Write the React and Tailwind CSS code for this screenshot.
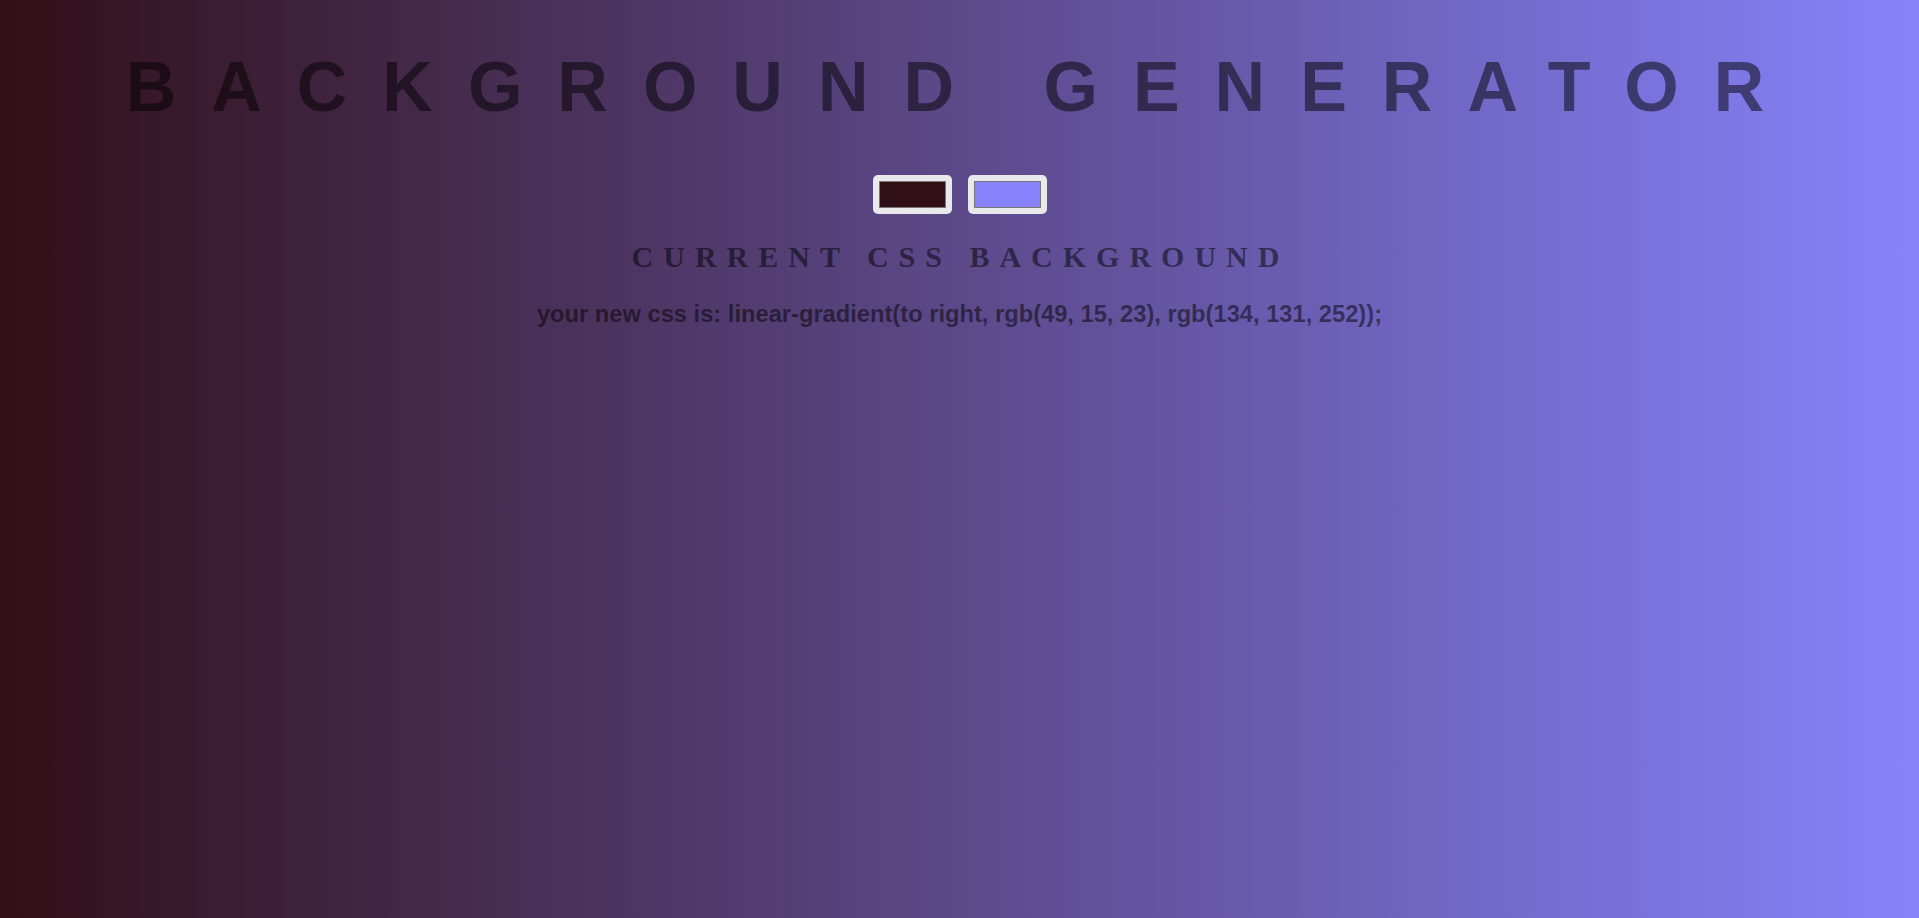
import { useState } from "react"

function App() {
    const [color1, setColor1] = useState("#310f17")
    const [color2, setColor2] = useState("#8683fc")

    function toRgb(hex) {
        const n = parseInt(hex.slice(1), 16)
        return `rgb(${(n >> 16) & 255}, ${(n >> 8) & 255}, ${n & 255})`
    }

    const css = `linear-gradient(to right, ${toRgb(color1)}, ${toRgb(color2)})`

    const inputClass = "w-[79px] h-[39px] p-[6px] rounded-[5px] border-0 bg-[#e9e9ed] cursor-pointer [&::-webkit-color-swatch-wrapper]:p-0 [&::-webkit-color-swatch]:border [&::-webkit-color-swatch]:border-[#777] [&::-webkit-color-swatch]:rounded-none"

    return (
        <main
            className="min-h-screen w-full flex flex-col items-center text-center text-black/50 font-['Liberation_Sans',Arial,sans-serif]"
            style={{ background: css }}
        >
            <h1 className="mt-[47px] text-[70px] leading-[80px] font-bold tracking-[35px] uppercase pl-[6px]">
                Background Generator
            </h1>
            <div className="mt-[48px] flex gap-[16px]">
                <input type="color" value={color1} onChange={(e) => setColor1(e.target.value)} className={inputClass} />
                <input type="color" value={color2} onChange={(e) => setColor2(e.target.value)} className={inputClass} />
            </div>
            <h3 className="mt-[26px] text-[30px] leading-[34px] font-bold tracking-[10px] uppercase font-['Liberation_Serif','Times_New_Roman',serif] pl-[2px]">
                Current CSS Background
            </h3>
            <p className="mt-[26px] text-[23.7px] leading-[28px] font-bold">
                your new css is: {css};
            </p>
        </main>
    )
}

export default App
